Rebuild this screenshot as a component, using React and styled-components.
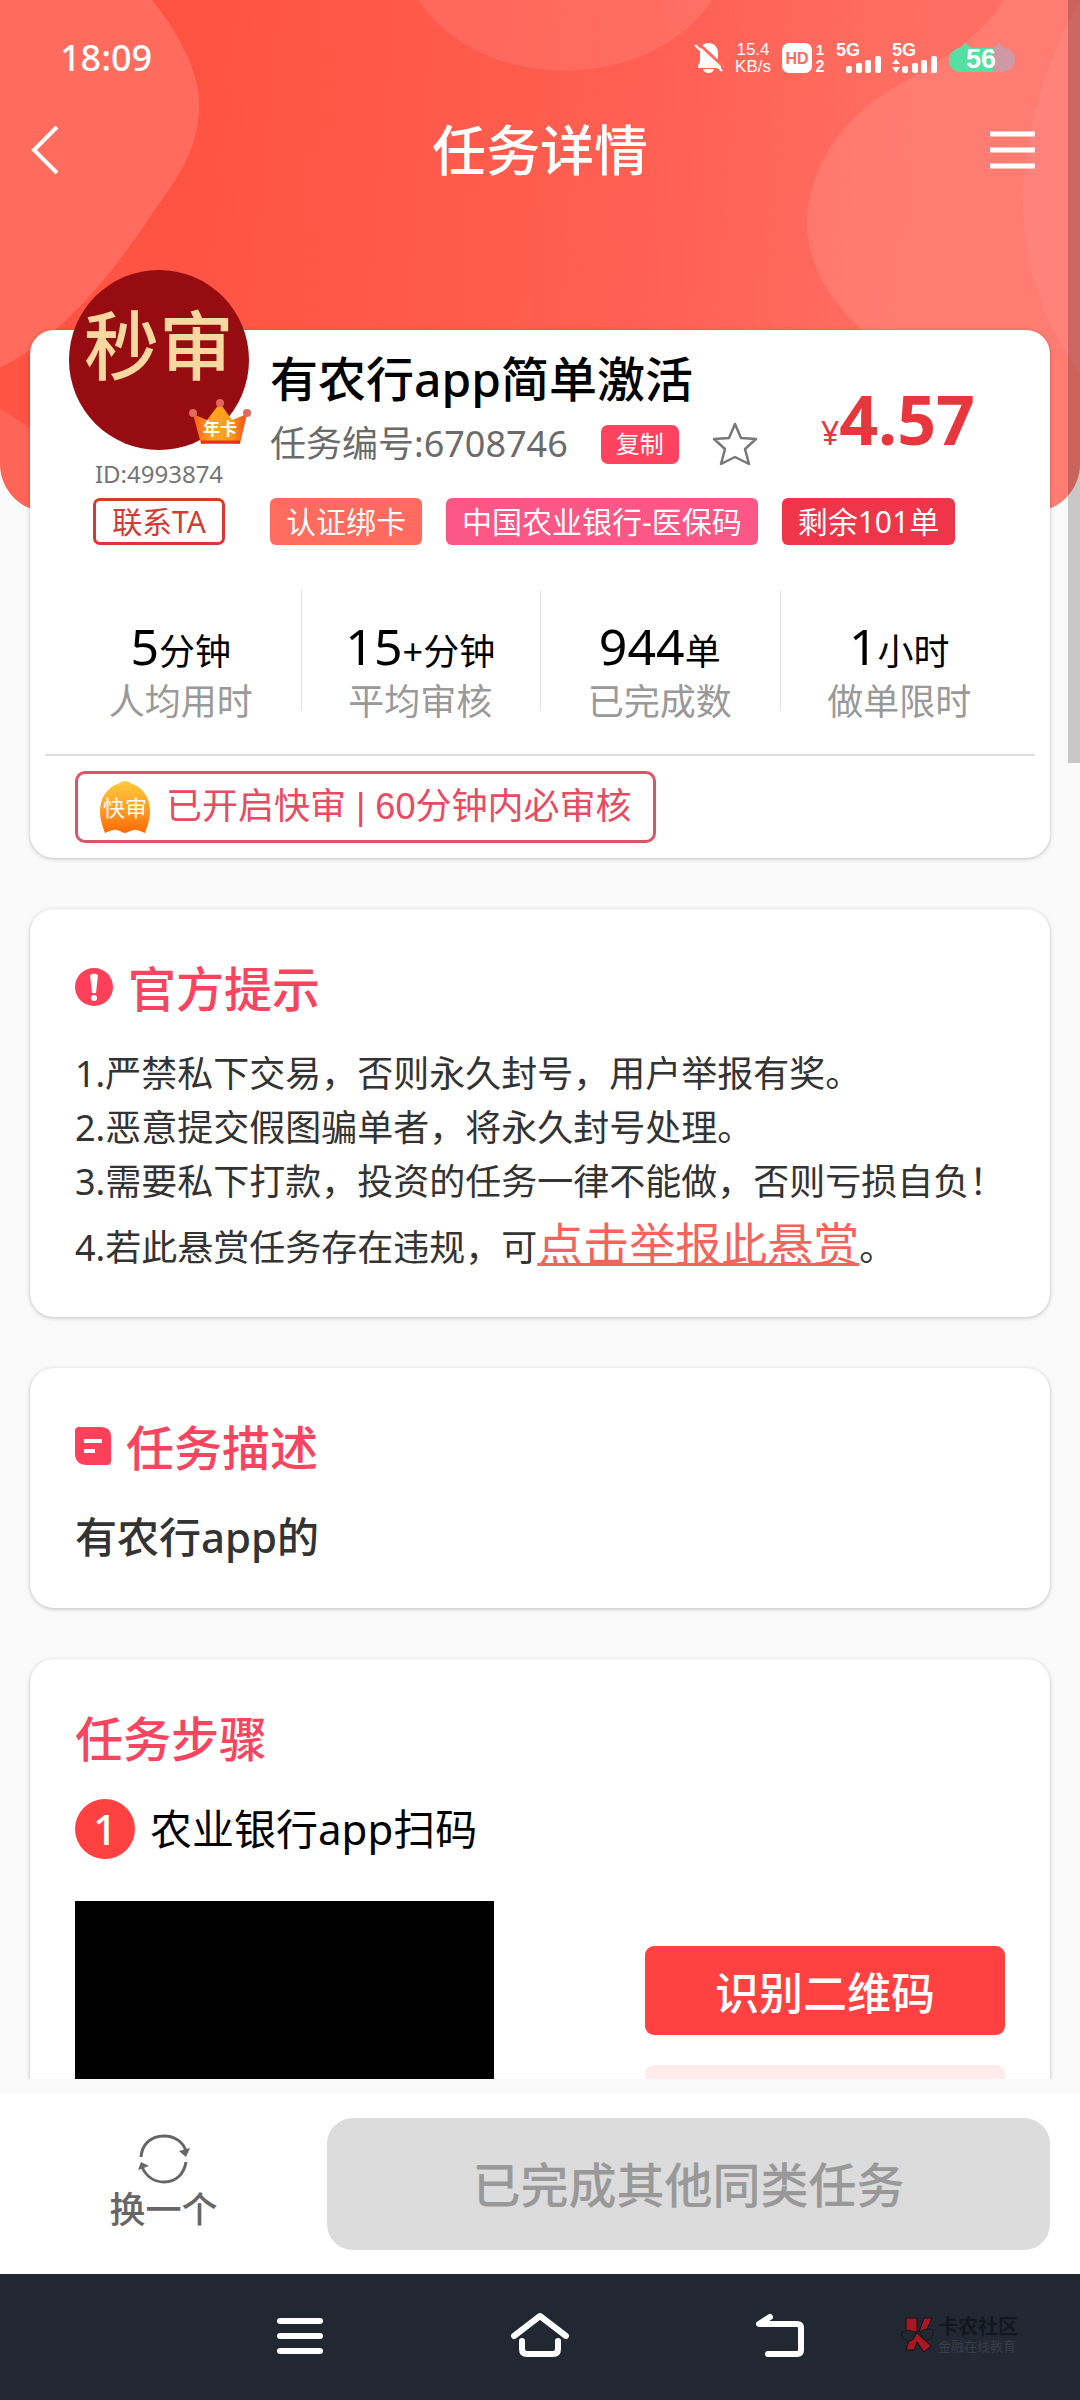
import React from "react";
import styled, { createGlobalStyle } from "styled-components";

const GlobalStyle = createGlobalStyle`
  * {
    box-sizing: border-box;
  }
  body {
    margin: 0;
    background: #fafafa;
    font-family: "Noto Sans", "Noto Sans CJK SC", sans-serif;
    color: #333;
  }
  button {
    border: 0;
    padding: 0;
    background: none;
    font: inherit;
    color: inherit;
  }
  h1, h2, p, ol, ul, dl, dd {
    margin: 0;
    padding: 0;
    list-style: none;
  }
  svg {
    display: block;
    flex: none;
    overflow: visible;
  }
`;

const Screen = styled.div`
  display: flex;
  flex-direction: column;
  height: 100vh;
`;

const Content = styled.main`
  position: relative;
  flex: 1;
  min-height: 0;
  overflow: hidden;
`;

const HeaderBack = styled.div`
  position: absolute;
  top: 0;
  left: 0;
  right: 0;
  height: 512px;
  overflow: hidden;
  border-radius: 0 0 48px 48px;
  background: linear-gradient(95deg, #ff5443 20%, #ff5f52 58%, #ff6e62 82%);
  svg {
    width: 100%;
    height: 100%;
  }
`;

const ScrollThumb = styled.div`
  position: absolute;
  top: 0;
  right: 0;
  width: 12px;
  height: 763px;
  background: rgba(0, 0, 0, 0.2);
`;

const StatusBar = styled.div`
  position: relative;
  display: flex;
  align-items: center;
  justify-content: space-between;
  height: 116px;
  padding: 0 64px 0 60px;
  color: #fff;
`;

const Clock = styled.span`
  font-size: 36px;
  font-weight: 500;
  line-height: 48px;
`;

const StatusIcons = styled.div`
  display: flex;
  align-items: center;
  gap: 10px;
  font-family: "Liberation Sans", sans-serif;
`;

const NetSpeed = styled.div`
  display: flex;
  flex-direction: column;
  align-items: center;
  width: 38px;
  font-size: 17px;
  line-height: 17px;
`;

const TitleBar = styled.header`
  position: relative;
  display: grid;
  grid-template-columns: 1fr auto 1fr;
  align-items: center;
  height: 68px;
  color: #fff;
`;

const BackButton = styled.button`
  justify-self: start;
  padding-left: 30px;
`;

const MenuButton = styled.button`
  justify-self: end;
  padding-right: 45px;
`;

const PageTitle = styled.h1`
  font-size: 54px;
  font-weight: 500;
  line-height: 68px;
`;

const Cards = styled.div`
  position: relative;
  display: flex;
  flex-direction: column;
  gap: 51px;
  padding: 146px 30px 0;
`;

const Card = styled.section`
  border-radius: 24px;
  background: #fff;
  box-shadow: 0 1px 4px rgba(0, 0, 0, 0.24);
  padding: ${(props) => (props.$flush ? "0 0 15px" : "44px 45px 40px")};
`;

const TaskHead = styled.div`
  display: flex;
  gap: 21px;
  padding: 0 75px 0 39px;
`;

const Publisher = styled.div`
  display: flex;
  flex-direction: column;
  align-items: center;
  width: 180px;
  margin-top: -60px;
`;

const Avatar = styled.div`
  position: relative;
  display: flex;
  justify-content: center;
  width: 180px;
  height: 180px;
  border-radius: 50%;
  background: #970c10;
  font-size: 75px;
  font-weight: 500;
  line-height: 150px;
  color: #f6d8a0;
`;

const CrownBadge = styled.div`
  position: absolute;
  right: -2px;
  bottom: 3px;
`;

const PublisherId = styled.span`
  margin: 9px 0;
  font-size: 24px;
  line-height: 30px;
  color: #757575;
`;

const ContactButton = styled.button`
  height: 47px;
  padding: 0 16px;
  border: 3px solid #d33a36;
  border-radius: 7px;
  font-size: 30px;
  line-height: 40px;
  color: #d33a36;
`;

const TaskInfo = styled.div`
  flex: 1;
  padding-top: 16px;
`;

const TaskSummary = styled.div`
  display: flex;
  align-items: flex-end;
  justify-content: space-between;
  height: 123px;
`;

const TaskTitle = styled.h2`
  font-size: 48px;
  font-weight: 500;
  line-height: 66px;
  color: #000;
`;

const TaskNumber = styled.div`
  display: flex;
  align-items: center;
  gap: 33px;
  margin-top: 7px;
  font-size: 36px;
  line-height: 50px;
  color: #6b6b6b;
`;

const CopyButton = styled.button`
  height: 39px;
  padding: 0 15px;
  border-radius: 7px;
  background: #ff435e;
  font-size: 24px;
  line-height: 38px;
  color: #fff;
`;

const Price = styled.div`
  font-size: 68px;
  font-weight: 700;
  line-height: 72px;
  color: #e8363f;
  small {
    font-size: 32px;
    font-weight: 400;
  }
`;

const Tags = styled.div`
  display: flex;
  gap: 24px;
  margin-top: 29px;
`;

const Tag = styled.span`
  padding: 0 16px;
  border-radius: 6px;
  background: ${(props) => props.$color};
  font-size: 30px;
  line-height: 47px;
  color: #fff;
  white-space: nowrap;
`;

const Stats = styled.dl`
  display: flex;
  margin: 45px 31px 0;
  height: 164px;
`;

const Stat = styled.div`
  display: flex;
  flex-direction: column-reverse;
  justify-content: flex-end;
  flex: 1;
  padding-top: 25px;
  text-align: center;
  & + & {
    background: linear-gradient(#e2e2e2, #e2e2e2) left top / 1px 121px no-repeat;
  }
  dd {
    font-size: 36px;
    line-height: 48px;
    color: #000;
  }
  b {
    font-size: 50px;
    font-weight: 400;
    line-height: 62px;
  }
  dt {
    font-size: 36px;
    line-height: 50px;
    color: #999;
  }
`;

const Rule = styled.hr`
  height: 2px;
  margin: 0 15px 15px;
  border: 0;
  background: #dedede;
`;

const FastReview = styled.div`
  display: inline-flex;
  align-items: center;
  gap: 16px;
  height: 72px;
  margin-left: 45px;
  padding: 0 22px;
  border: 3px solid #dd5468;
  border-radius: 10px;
  font-family: "Liberation Sans", "Noto Sans CJK SC", sans-serif;
  font-size: 36px;
  line-height: 60px;
  color: #ea4a61;
`;

const SectionTitle = styled.h2`
  display: flex;
  align-items: center;
  gap: 15px;
  font-size: 48px;
  font-weight: 500;
  line-height: 72px;
  color: #f8455f;
  svg {
    margin-bottom: 5px;
  }
`;

const Tips = styled.ol`
  margin: 22px -15px 0 0;
  font-size: 36px;
  line-height: 54px;
`;

const ReportLink = styled.a`
  font-size: 46px;
  line-height: 68px;
  color: #f4635c;
  text-decoration: underline;
  text-decoration-thickness: 3px;
`;

const Description = styled.p`
  margin-top: 22px;
  font-size: 42px;
  font-weight: 500;
  line-height: 62px;
`;

const StepTitle = styled.div`
  display: flex;
  align-items: center;
  gap: 15px;
  margin-top: 24px;
  font-size: 42px;
  line-height: 60px;
  color: #000;
`;

const StepNumber = styled.span`
  width: 60px;
  height: 60px;
  border-radius: 50%;
  background: #ff4141;
  font-weight: 500;
  text-align: center;
  color: #fff;
`;

const StepBody = styled.div`
  display: flex;
  align-items: center;
  justify-content: space-between;
  margin-top: 42px;
`;

const QrImage = styled.div`
  width: 419px;
  height: 298px;
  background: #000;
`;

const StepActions = styled.div`
  display: flex;
  flex-direction: column;
  gap: 30px;
  width: 360px;
`;

const StepButton = styled.button`
  height: 89px;
  padding-top: 4px;
  border-radius: 9px;
  background: ${(props) => (props.$light ? "#ffebeb" : "#ff4141")};
  font-size: 44px;
  font-weight: 500;
  line-height: 84px;
  color: ${(props) => (props.$light ? "#ff4141" : "#fff")};
`;

const ActionBar = styled.footer`
  display: flex;
  align-items: center;
  height: 195px;
  padding-right: 30px;
  border-top: 15px solid #f9f9f9;
  background: #fff;
`;

const SwapButton = styled.button`
  display: flex;
  flex-direction: column;
  align-items: center;
  gap: 1px;
  width: 327px;
  font-size: 36px;
  font-weight: 500;
  line-height: 50px;
  color: #666;
`;

const DoneButton = styled.button`
  flex: 1;
  height: 132px;
  padding-top: 2px;
  border-radius: 26px;
  background: #dcdcdc;
  font-size: 48px;
  font-weight: 500;
  line-height: 130px;
  color: #999;
`;

const SystemNav = styled.nav`
  display: grid;
  grid-template-columns: 3fr 4fr 4fr 4fr 3fr;
  align-items: center;
  justify-items: center;
  height: 126px;
  padding-bottom: 5px;
  background: #212832;
`;

const NavKey = styled.button`
  grid-column: ${(props) => props.$column};
`;

const Community = styled.div`
  grid-column: 5;
  justify-self: start;
  display: flex;
  align-items: center;
  gap: 3px;
  font-size: 20px;
  font-weight: 700;
  line-height: 22px;
  color: #12161e;
  small {
    display: block;
    font-size: 13px;
    font-weight: 400;
    line-height: 16px;
    color: #363e48;
  }
`;

const HeaderShapes = () => (
  <svg viewBox="0 0 1080 508" preserveAspectRatio="none" aria-hidden="true">
    <g fill="#fff">
      <path d="M0 0H152C186 42 200 80 199 105C199 150 175 180 150 215C110 275 60 335 0 365Z" fillOpacity="0.14" />
      <path d="M0 405L60 445V508H0Z" fillOpacity="0.1" />
      <path d="M418 0C446 42 500 70 565 70S684 42 712 0Z" fillOpacity="0.09" />
      <path d="M1004 0C975 45 930 66 885 92C830 128 806 180 807 225C809 270 838 308 868 332L900 508H1080V0Z" fillOpacity="0.1" />
      <path d="M1080 0C1042 70 1024 130 1023 200C1024 270 1044 320 1080 370Z" fillOpacity="0.06" />
    </g>
  </svg>
);

const MuteIcon = () => (
  <svg width="30" height="32" viewBox="0 0 30 32">
    <path d="M14 1C20 1 24 5 24 11V19L27 24V26H4V24L6 19V11C6 5 9 1 14 1Z" fill="#fff" />
    <path d="M9 27H20C19 30 17 31 14.500 31S10 30 9 27Z" fill="#fff" />
    <path d="M4 1L31 26" stroke="#ff6a5d" strokeWidth="3" />
    <path d="M1 3L28 29" stroke="#fff" strokeWidth="2.400" />
  </svg>
);

const HdIcon = () => (
  <svg width="44" height="32" viewBox="0 0 44 32">
    <rect y="1" width="30" height="30" rx="7" fill="#fff" />
    <text x="15" y="22" textAnchor="middle" fontSize="16" fontWeight="700" fill="#ff6a5d">HD</text>
    <text x="38" y="13" textAnchor="middle" fontSize="15" fontWeight="700" fill="#fff">1</text>
    <text x="38" y="30" textAnchor="middle" fontSize="16" fontWeight="700" fill="#fff">2</text>
  </svg>
);

const SignalIcon = ({ active }) => (
  <svg width="46" height="32" viewBox="0 0 46 32">
    <text y="14" fontSize="18" fontWeight="700" fill="#fff">5G</text>
    <g fill="#fff">
      <rect x="10" y="24" width="6" height="7" rx="2" />
      <rect x="20" y="21" width="6" height="10" rx="2" />
      <rect x="29" y="18" width="6" height="13" rx="2" />
      <rect x="39" y="14" width="6" height="17" rx="2" />
      {active && <path d="M0 22L4 17L8 22ZM0 25H8L4 31Z" />}
    </g>
  </svg>
);

const BatteryIcon = () => (
  <svg width="68" height="32" viewBox="0 0 68 32">
    <clipPath id="cat">
      <path d="M12 6L17 1L23 6H45L51 1L56 6C63 7 67 12 67 18C67 26 61 30 54 30H13C6 30 1 26 1 18C1 12 5 7 12 6Z" />
    </clipPath>
    <g clipPath="url(#cat)">
      <rect width="68" height="32" fill="#cf98a5" />
      <rect width="45" height="32" fill="#55dfa2" />
    </g>
    <text x="33" y="26" textAnchor="middle" fontSize="27" fontWeight="700" fill="#fff">56</text>
  </svg>
);

const BackIcon = () => (
  <svg width="30" height="50" viewBox="0 0 30 50">
    <path d="M27 2L4 25L27 48" fill="none" stroke="#fff" strokeWidth="4" />
  </svg>
);

const MenuIcon = () => (
  <svg width="45" height="38" viewBox="0 0 45 38">
    <path d="M0 3H45M0 19H45M0 35H45" stroke="#fff" strokeWidth="5" />
  </svg>
);

const CrownIcon = () => (
  <svg width="62" height="48" viewBox="0 0 62 48">
    <defs>
      <linearGradient id="gold" x1="0" y1="0" x2="1" y2="0">
        <stop offset="0" stopColor="#fb5b1c" />
        <stop offset="0.35" stopColor="#fba81e" />
        <stop offset="0.7" stopColor="#fb9a1a" />
        <stop offset="1" stopColor="#f04e1c" />
      </linearGradient>
    </defs>
    <path d="M4 15L18 21L31 4L43 21L58 15L51 45H12Z" fill="url(#gold)" />
    <path d="M12 43H51" stroke="#e8321d" strokeWidth="3" />
    <g fill="#e0695c">
      <circle cx="4" cy="14" r="4" />
      <circle cx="31" cy="4" r="4" />
      <circle cx="58" cy="14" r="4" />
    </g>
    <text x="31" y="36" textAnchor="middle" fontSize="17" fontWeight="700" fill="#fff">年卡</text>
  </svg>
);

const StarIcon = () => (
  <svg width="46" height="46" viewBox="0 0 46 46">
    <path
      d="M23 3L29 17L44 18L33 28L37 43L23 36L9 43L13 28L2 18L17 17Z"
      fill="none"
      stroke="#777"
      strokeWidth="2.500"
      strokeLinejoin="round"
    />
  </svg>
);

const FastIcon = () => (
  <svg width="50" height="54" viewBox="0 0 50 54">
    <defs>
      <linearGradient id="fast" x1="0" y1="0" x2="0" y2="1">
        <stop offset="0" stopColor="#ffcb3c" />
        <stop offset="0.5" stopColor="#ffa126" />
        <stop offset="1" stopColor="#fb6a05" />
      </linearGradient>
    </defs>
    <path
      d="M25 1C29 1 31 4 35 5C45 10 50 20 50 31C50 40 47 47 45 53C41 52 37 49 34 50C30 50 28 53 25 53S20 50 16 50C12 49 9 52 5 53C3 47 0 40 0 31C0 20 5 10 15 5C19 4 21 1 25 1Z"
      fill="url(#fast)"
    />
    <text x="25" y="36" textAnchor="middle" fontSize="22" fontWeight="400" fill="#fff">快审</text>
  </svg>
);

const AlertIcon = () => (
  <svg width="38" height="38" viewBox="0 0 38 38">
    <circle cx="19" cy="19" r="19" fill="#fe405b" />
    <path d="M15 7Q19 4 23 7L21 25H17Z" fill="#fff" />
    <circle cx="19" cy="30" r="3" fill="#fff" />
  </svg>
);

const NoteIcon = () => (
  <svg width="36" height="38" viewBox="0 0 36 38">
    <path d="M4 0H26Q36 0 36 10V34Q36 38 32 38H12Q0 38 0 26V4Q0 0 4 0Z" fill="#fe405b" />
    <path d="M9 14H27M9 24H20" stroke="#fff" strokeWidth="4" />
  </svg>
);

const SwapIcon = () => (
  <svg width="52" height="50" viewBox="0 0 52 50">
    <g fill="none" stroke="#666" strokeWidth="3">
      <path d="M3 23C4 10 13 2 26 2C37 2 45 8 48 17" />
      <path d="M48 28C46 40 38 48 26 48C16 48 8 42 4 33" />
    </g>
    <path d="M41 17L52 14L48 23ZM0 36L3 28L11 32Z" fill="#666" />
  </svg>
);

const keyStroke = {
  fill: "none",
  stroke: "#fff",
  strokeWidth: 6,
  strokeLinecap: "round",
  strokeLinejoin: "round",
};

const RecentKey = () => (
  <svg width="46" height="44" viewBox="0 0 46 44" {...keyStroke}>
    <path d="M3 8H43M3 23H43M3 38H43" />
  </svg>
);

const HomeKey = () => (
  <svg width="58" height="46" viewBox="0 0 58 46" {...keyStroke}>
    <path d="M3 24L29 4L55 24M11 29V37Q11 42 16 42H42Q47 42 47 37V29" />
  </svg>
);

const ReturnKey = () => (
  <svg width="48" height="46" viewBox="0 0 48 46" {...keyStroke}>
    <path d="M14 5L3 12H41Q45 12 45 16V38Q45 42 41 42H12" />
  </svg>
);

const CommunityLogo = () => (
  <svg width="35" height="38" viewBox="0 0 35 38">
    <g fill="#a91820" stroke="#140d12" strokeWidth="1">
      <path d="M6 2H17V16H6Z" />
      <path d="M24 2H32L27 13L19 16Z" />
      <path d="M17 17L31 30L24 36L17 26L14 34H6L9 25Z" />
    </g>
    <path d="M1 17Q8 12 16 17Q14 27 6 25Q2 23 1 17M20 16Q27 11 33 14Q34 22 28 24Q22 24 20 16" fill="#212832" stroke="#12161e" />
  </svg>
);

const tags = [
  { text: "认证绑卡", color: "#ff6b5e" },
  { text: "中国农业银行-医保码", color: "#fb5786" },
  { text: "剩余101单", color: "#ee3549" },
];

const stats = [
  { value: "5", unit: "分钟", label: "人均用时" },
  { value: "15", unit: "+分钟", label: "平均审核" },
  { value: "944", unit: "单", label: "已完成数" },
  { value: "1", unit: "小时", label: "做单限时" },
];

const App = () => {
  return (
    <Screen>
      <GlobalStyle />
      <Content>
        <HeaderBack>
          <HeaderShapes />
        </HeaderBack>
        <StatusBar>
          <Clock>18:09</Clock>
          <StatusIcons>
            <MuteIcon />
            <NetSpeed>
              <span>15.4</span>
              <span>KB/s</span>
            </NetSpeed>
            <HdIcon />
            <SignalIcon />
            <SignalIcon active />
            <BatteryIcon />
          </StatusIcons>
        </StatusBar>
        <TitleBar>
          <BackButton aria-label="返回">
            <BackIcon />
          </BackButton>
          <PageTitle>任务详情</PageTitle>
          <MenuButton aria-label="菜单">
            <MenuIcon />
          </MenuButton>
        </TitleBar>

        <Cards>
          <Card $flush>
            <TaskHead>
              <Publisher>
                <Avatar>
                  秒审
                  <CrownBadge>
                    <CrownIcon />
                  </CrownBadge>
                </Avatar>
                <PublisherId>ID:4993874</PublisherId>
                <ContactButton>联系TA</ContactButton>
              </Publisher>
              <TaskInfo>
                <TaskSummary>
                  <div>
                    <TaskTitle>有农行app简单激活</TaskTitle>
                    <TaskNumber>
                      <span>任务编号:6708746</span>
                      <CopyButton>复制</CopyButton>
                      <button aria-label="收藏">
                        <StarIcon />
                      </button>
                    </TaskNumber>
                  </div>
                  <Price>
                    <small>¥</small>4.57
                  </Price>
                </TaskSummary>
                <Tags>
                  {tags.map((tag) => (
                    <Tag key={tag.text} $color={tag.color}>
                      {tag.text}
                    </Tag>
                  ))}
                </Tags>
              </TaskInfo>
            </TaskHead>
            <Stats>
              {stats.map((stat) => (
                <Stat key={stat.label}>
                  <dt>{stat.label}</dt>
                  <dd>
                    <b>{stat.value}</b>
                    {stat.unit}
                  </dd>
                </Stat>
              ))}
            </Stats>
            <Rule />
            <FastReview>
              <FastIcon />
              已开启快审 | 60分钟内必审核
            </FastReview>
          </Card>

          <Card>
            <SectionTitle>
              <AlertIcon />
              官方提示
            </SectionTitle>
            <Tips>
              <li>1.严禁私下交易，否则永久封号，用户举报有奖。</li>
              <li>2.恶意提交假图骗单者，将永久封号处理。</li>
              <li>3.需要私下打款，投资的任务一律不能做，否则亏损自负！</li>
              <li>
                4.若此悬赏任务存在违规，可
                <ReportLink href="#report">点击举报此悬赏</ReportLink>。
              </li>
            </Tips>
          </Card>

          <Card>
            <SectionTitle>
              <NoteIcon />
              任务描述
            </SectionTitle>
            <Description>有农行app的</Description>
          </Card>

          <Card>
            <SectionTitle>任务步骤</SectionTitle>
            <StepTitle>
              <StepNumber>1</StepNumber>
              农业银行app扫码
            </StepTitle>
            <StepBody>
              <QrImage />
              <StepActions>
                <StepButton>识别二维码</StepButton>
                <StepButton $light />
              </StepActions>
            </StepBody>
          </Card>
        </Cards>
        <ScrollThumb />
      </Content>

      <ActionBar>
        <SwapButton>
          <SwapIcon />
          换一个
        </SwapButton>
        <DoneButton>已完成其他同类任务</DoneButton>
      </ActionBar>

      <SystemNav>
        <NavKey $column={2} aria-label="最近任务">
          <RecentKey />
        </NavKey>
        <NavKey $column={3} aria-label="主页">
          <HomeKey />
        </NavKey>
        <NavKey $column={4} aria-label="返回">
          <ReturnKey />
        </NavKey>
        <Community>
          <CommunityLogo />
          <div>
            卡农社区
            <small>金融在线教育</small>
          </div>
        </Community>
      </SystemNav>
    </Screen>
  );
};

export default App;
